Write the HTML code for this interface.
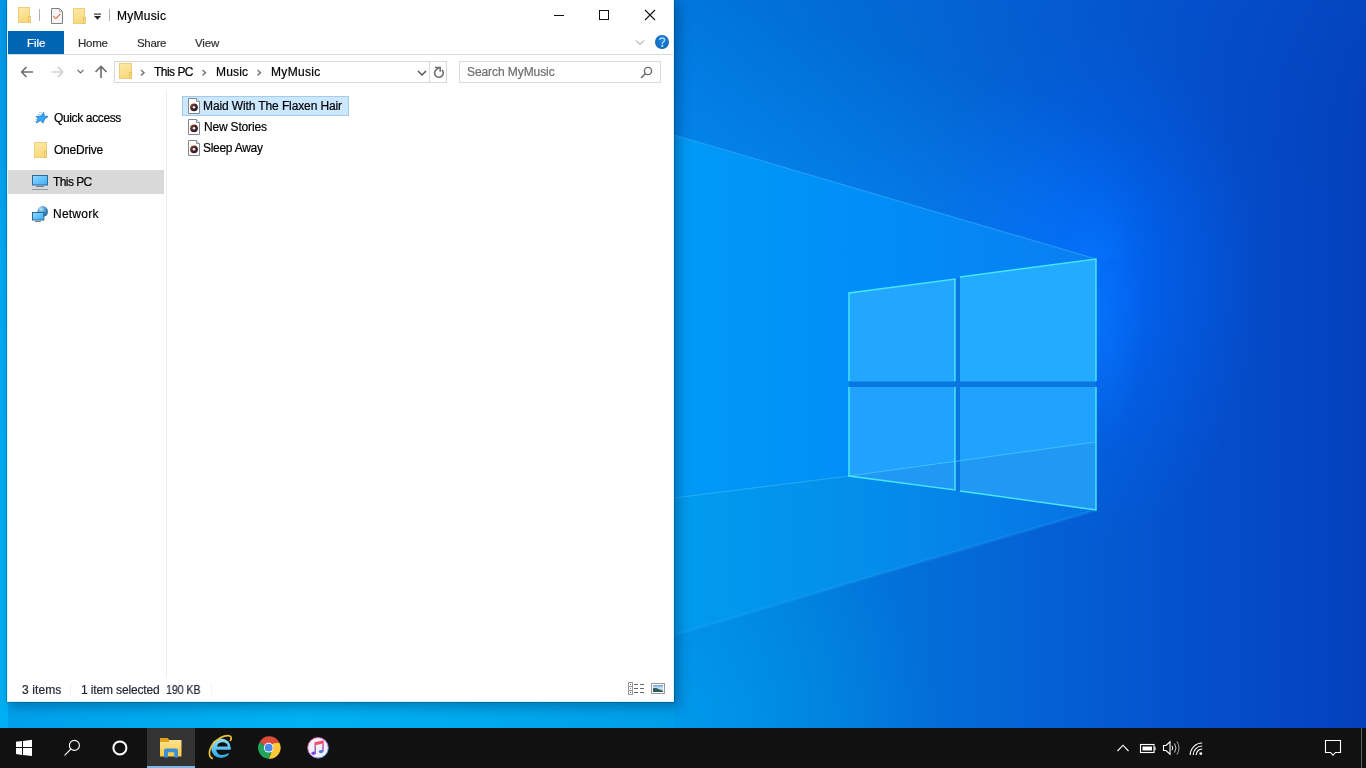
<!DOCTYPE html>
<html><head><meta charset="utf-8">
<style>
*{margin:0;padding:0;box-sizing:border-box}
html,body{width:1366px;height:768px;overflow:hidden;background:#0558cc}
body{position:relative;font-family:"Liberation Sans",sans-serif;font-size:12px;color:#000}
.a{position:absolute}
.t{position:absolute;white-space:nowrap;line-height:14px;z-index:5;will-change:transform;-webkit-text-stroke:0.2px currentColor}
#wall{position:absolute;left:0;top:0;width:1366px;height:728px}
#win{position:absolute;left:7px;top:0;width:667px;height:702px;background:#fff;border:1px solid #d8f8ff;border-top:0;box-shadow:0 0 0 1px rgba(0,50,90,.28),4px 4px 11px 1px rgba(0,40,80,.36)}
#tb{position:absolute;left:0;top:728px;width:1366px;height:40px;background:#111}
</style></head><body>
<!-- WALLPAPER -->
<svg id="wall" width="1366" height="728" viewBox="0 0 1366 728">
<defs>
<linearGradient id="gBase" gradientUnits="userSpaceOnUse" x1="674" y1="0" x2="1366" y2="0"><stop offset="0" stop-color="#0088e4"/><stop offset="0.18" stop-color="#007cdc"/><stop offset="0.47" stop-color="#0466d6"/><stop offset="0.76" stop-color="#044fcc"/><stop offset="1" stop-color="#0440bc"/></linearGradient>
<linearGradient id="gBeam" gradientUnits="userSpaceOnUse" x1="674" y1="0" x2="1096" y2="0"><stop offset="0" stop-color="#009af6"/><stop offset="0.45" stop-color="#008ef8"/><stop offset="1" stop-color="#0a7ef2"/></linearGradient>
<linearGradient id="gFloor" gradientUnits="userSpaceOnUse" x1="674" y1="0" x2="1096" y2="0"><stop offset="0" stop-color="#009cef"/><stop offset="0.5" stop-color="#048cea"/><stop offset="1" stop-color="#0672e4"/></linearGradient>
<radialGradient id="gGlow" cx="0.5" cy="0.5" r="0.5">
<stop offset="0" stop-color="#0068ff" stop-opacity="0.9"/>
<stop offset="0.55" stop-color="#0068ff" stop-opacity="0.315"/>
<stop offset="1" stop-color="#0068ff" stop-opacity="0"/>
</radialGradient>
<radialGradient id="gBL" gradientUnits="userSpaceOnUse" cx="674" cy="728" r="260">
<stop offset="0" stop-color="#00a8f0" stop-opacity="0.55"/>
<stop offset="1" stop-color="#00a8f0" stop-opacity="0"/>
</radialGradient>
<linearGradient id="gLeft" gradientUnits="userSpaceOnUse" x1="0" y1="0" x2="674" y2="0">
<stop offset="0" stop-color="#00a0ea"/><stop offset="0.45" stop-color="#00b2f2"/><stop offset="1" stop-color="#009ee8"/>
</linearGradient>
<linearGradient id="gTop" gradientUnits="userSpaceOnUse" x1="0" y1="0" x2="0" y2="200"><stop offset="0" stop-color="#0450c8" stop-opacity="0.3"/><stop offset="1" stop-color="#0340b0" stop-opacity="0"/></linearGradient>
<linearGradient id="gRayGlow" gradientUnits="userSpaceOnUse" x1="885" y1="197" x2="927" y2="53"><stop offset="0" stop-color="#0a88ff" stop-opacity="0.32"/><stop offset="1" stop-color="#0a88ff" stop-opacity="0"/></linearGradient>
<linearGradient id="gLeftV" gradientUnits="userSpaceOnUse" x1="0" y1="0" x2="0" y2="728"><stop offset="0" stop-color="#0098ea"/><stop offset="0.4" stop-color="#00abf4"/><stop offset="1" stop-color="#00b0f4"/></linearGradient>
<linearGradient id="gRayMask" gradientUnits="userSpaceOnUse" x1="674" y1="0" x2="1366" y2="0"><stop offset="0" stop-color="#fff"/><stop offset="0.53" stop-color="#fff"/><stop offset="0.70" stop-color="#000"/></linearGradient>
<mask id="mRay" maskUnits="userSpaceOnUse" x="0" y="0" width="1366" height="728"><rect x="0" y="0" width="1366" height="728" fill="url(#gRayMask)"/></mask>
<radialGradient id="gHalo" cx="0.5" cy="0.5" r="0.5"><stop offset="0" stop-color="#0a7cff" stop-opacity="0.55"/><stop offset="1" stop-color="#0a7cff" stop-opacity="0"/></radialGradient>
<filter id="fSoft" x="-5%" y="-5%" width="110%" height="110%"><feGaussianBlur stdDeviation="1.2"/></filter>
</defs>
<rect width="1366" height="728" fill="url(#gBase)"/>
<rect width="1366" height="728" fill="url(#gBL)"/>
<ellipse cx="1090" cy="280" rx="170" ry="260" fill="url(#gGlow)"/>
<rect width="1366" height="200" fill="url(#gTop)"/>
<ellipse cx="1098" cy="320" rx="45" ry="130" fill="url(#gHalo)"/>
<polygon points="674,0 1366,0 1366,259 1096,259 674,135" fill="url(#gRayGlow)" mask="url(#mRay)"/>
<rect width="674" height="728" fill="url(#gLeft)"/>
<rect width="8" height="728" fill="url(#gLeftV)"/>
<g>
<polygon points="674,135 1096,259 1096,445 849,476 674,498" fill="url(#gBeam)"/>
<polygon points="674,498 849,476 1096,445 1096,510 674,635" fill="url(#gFloor)"/>
</g>
<line x1="674" y1="135" x2="1096" y2="259" stroke="#3ab0ff" stroke-opacity="0.55" stroke-width="1.2"/>
<line x1="674" y1="635" x2="1096" y2="510" stroke="#3ab0ff" stroke-opacity="0.18" stroke-width="3"/>
<line x1="674" y1="498" x2="849" y2="476" stroke="#50c8ff" stroke-opacity="0.45" stroke-width="1.2"/>
<polygon points="849,293 1096,259 1096,510 849,476" fill="#0a76e0"/>
<polygon points="849,293 955,279 955,381.5 849,381.5" fill="#22a6fe"/>
<polygon points="960,277 1096,259 1096,381.5 960,381.5" fill="#22abff"/>
<polygon points="849,387 955,387 955,462 849,476" fill="#22a2ff"/>
<polygon points="849,476 955,462 955,490 849,476" fill="#2098f4"/>
<polygon points="960,387 1096,387 1096,442 960,461" fill="#22a2ff"/>
<polygon points="960,461 1096,442 1096,510 960,491" fill="#2298f5"/>
<g stroke="#4aeaf8" stroke-width="1.5" fill="none" stroke-opacity="0.95">
<polyline points="849,381 849,293 955,279 955,381"/>
<polyline points="849,387 849,476 955,490 955,387"/>
<polyline points="960,277 1096,259 1096,381"/>
<polyline points="1096,387 1096,510 960,491"/>
</g>
<line x1="849" y1="476" x2="1096" y2="442" stroke="#50dcff" stroke-opacity="0.6" stroke-width="1.2"/>
</svg>

<!-- WINDOW -->
<div id="win"></div>
<div id="ui" class="a" style="left:0;top:0;width:1366px;height:768px">
<!--TEXT-->
<div class="t" style="left:116.90px;top:8.80px;font-size:12px;letter-spacing:0.267px;color:#000">MyMusic</div>
<div class="t" style="left:26.70px;top:35.90px;font-size:11.5px;letter-spacing:-0.033px;color:#fff">File</div>
<div class="t" style="left:77.90px;top:35.90px;font-size:11.5px;letter-spacing:-0.233px;color:#333">Home</div>
<div class="t" style="left:136.70px;top:36.00px;font-size:11.5px;letter-spacing:-0.300px;color:#333">Share</div>
<div class="t" style="left:195.40px;top:36.00px;font-size:11.5px;letter-spacing:-0.167px;color:#333">View</div>
<div class="t" style="left:153.95px;top:64.80px;font-size:12px;letter-spacing:-0.525px;color:#000">This PC</div>
<div class="t" style="left:215.90px;top:64.90px;font-size:12px;letter-spacing:0.175px;color:#000">Music</div>
<div class="t" style="left:270.50px;top:64.90px;font-size:12px;letter-spacing:0.317px;color:#000">MyMusic</div>
<div class="t" style="left:467.40px;top:64.90px;font-size:12px;letter-spacing:-0.077px;color:#6d6d6d">Search MyMusic</div>
<div class="t" style="left:53.70px;top:110.90px;font-size:12px;letter-spacing:-0.364px;color:#000">Quick access</div>
<div class="t" style="left:53.70px;top:142.70px;font-size:12px;letter-spacing:-0.229px;color:#000">OneDrive</div>
<div class="t" style="left:53.40px;top:174.90px;font-size:12px;letter-spacing:-0.567px;color:#000">This PC</div>
<div class="t" style="left:52.70px;top:207.00px;font-size:12px;letter-spacing:0.233px;color:#000">Network</div>
<div class="t" style="left:203.40px;top:99.05px;font-size:12px;letter-spacing:-0.113px;color:#000">Maid With The Flaxen Hair</div>
<div class="t" style="left:203.70px;top:120.05px;font-size:12px;letter-spacing:-0.180px;color:#000">New Stories</div>
<div class="t" style="left:203.40px;top:140.85px;font-size:12px;letter-spacing:-0.289px;color:#000">Sleep Away</div>
<div class="t" style="left:21.50px;top:682.80px;font-size:12px;letter-spacing:0.100px;color:#1e2533">3 items</div>
<div class="t" style="left:81.05px;top:682.80px;font-size:12px;letter-spacing:-0.139px;color:#1e2533">1 item selected</div>
<div class="t" style="left:165.92px;top:682.80px;font-size:12px;color:#1e2533;transform:scaleX(0.879);transform-origin:0 0">190 KB</div>
<!--/TEXT-->
<!-- title bar icons -->
<svg class="a" style="left:0;top:0" width="674" height="90" viewBox="0 0 674 90">
 <defs><linearGradient id="gFy" x1="0" y1="0" x2="0.3" y2="1"><stop offset="0" stop-color="#fdeaa8"/><stop offset="1" stop-color="#f9d97c"/></linearGradient></defs>
 <!-- folder 1 -->
 <g>
  <rect x="18.5" y="7.5" width="11" height="15" fill="url(#gFy)" stroke="#ebcf7c"/>
  <rect x="28.5" y="16.5" width="2" height="6" fill="#f9dc88" stroke="#e3c060" stroke-width="0.8"/>
 </g>
 <rect x="39" y="9" width="1" height="12" fill="#b0b0b0"/>
 <!-- checklist doc -->
 <g>
  <path d="M51.5 8.5 H59.5 L62.5 11.5 V23.5 H51.5 Z" fill="#f6f6f8" stroke="#808080"/>
  <path d="M59.5 8.5 V11.5 H62.5" fill="none" stroke="#9a9a9a" stroke-width="0.8"/>
  <path d="M53.3 16.3 L55.8 18.6 L60.3 14" fill="none" stroke="#e27a52" stroke-width="1.25"/>
 </g>
 <!-- folder 2 -->
 <g>
  <rect x="73.5" y="8.5" width="11" height="15" fill="url(#gFy)" stroke="#ebcf7c"/>
  <rect x="83.5" y="17.5" width="2" height="6" fill="#f9dc88" stroke="#e3c060" stroke-width="0.8"/>
 </g>
 <!-- dropdown -->
 <rect x="94" y="13.6" width="7" height="1" fill="#111"/>
 <path d="M94 16 H101 L97.5 19.8 Z" fill="#222"/>
 <rect x="109" y="9" width="1" height="12" fill="#b0b0b0"/>
 <!-- window controls -->
 <rect x="554" y="15" width="10" height="1" fill="#111"/>
 <rect x="599.5" y="10.5" width="9" height="9" fill="none" stroke="#111"/>
 <path d="M645 10 L655 20 M655 10 L645 20" stroke="#111" stroke-width="1.1"/>
 <!-- ribbon -->
 <rect x="8" y="31" width="56" height="23" fill="#0066b4"/>
 <rect x="8" y="54" width="665" height="1" fill="#dadbdc"/>
 <path d="M636 40.5 L640 44.5 L644 40.5" fill="none" stroke="#8a8a8a" stroke-width="1"/>
 <defs><radialGradient id="gHelp" cx="0.5" cy="0.45" r="0.55"><stop offset="0" stop-color="#1e7fd8"/><stop offset="0.8" stop-color="#166fc6"/><stop offset="1" stop-color="#0d5aa6"/></radialGradient></defs>
 <circle cx="662" cy="42" r="7" fill="url(#gHelp)"/>
 <path d="M659.6 39.8 Q659.9 38 662.2 38 Q664.6 38 664.6 40.1 Q664.6 41.4 663.1 42.2 Q662.3 42.7 662.3 44.2" fill="none" stroke="#a8e4ff" stroke-width="1.35"/>
 <rect x="661.3" y="45.1" width="1.9" height="1.8" fill="#a8ecff"/>
 <!-- nav arrows -->
 <path d="M21.5 72 H33 M21.5 72 L26.5 67 M21.5 72 L26.5 77" fill="none" stroke="#6b6b6b" stroke-width="1.6"/>
 <path d="M63 72 H51.5 M63 72 L58 67 M63 72 L58 77" fill="none" stroke="#d0d0d0" stroke-width="1.6"/>
 <path d="M77.5 69.8 L80.5 72.8 L83.5 69.8" fill="none" stroke="#6b6b6b" stroke-width="1.2"/>
 <path d="M101 78 V66.5 M95.5 72 L101 66.5 L106.5 72" fill="none" stroke="#6b6b6b" stroke-width="1.6"/>
 <!-- address box -->
 <rect x="114.5" y="61.5" width="332" height="21" fill="#fff" stroke="#d9d9d9"/>
 <rect x="429" y="62" width="1" height="20" fill="#d9d9d9"/>
 <g>
  <rect x="119.5" y="63.5" width="12" height="15" fill="url(#gFy)" stroke="#ebcf7c"/>
  <rect x="129.5" y="72.5" width="2" height="6" fill="#f9dc88" stroke="#e3c060" stroke-width="0.8"/>
 </g>
 <path d="M141 70 L144 72.7 L141 75.4" fill="none" stroke="#7a7a7a" stroke-width="1.5"/>
 <path d="M202.5 70 L205.5 72.7 L202.5 75.4" fill="none" stroke="#7a7a7a" stroke-width="1.5"/>
 <path d="M257.5 70 L260.5 72.7 L257.5 75.4" fill="none" stroke="#7a7a7a" stroke-width="1.5"/>
 <path d="M418 71 L422 75 L426 71" fill="none" stroke="#555" stroke-width="1.5"/>
 <path d="M441.9 69.9 A4.3 4.3 0 1 1 436.3 69.6 L439.2 67.6" fill="none" stroke="#6d6d6d" stroke-width="1.6"/>
 <path d="M435 67.4 H440.2 V71.8" fill="none" stroke="#6d6d6d" stroke-width="1.5"/>
 <!-- search box -->
 <rect x="459.5" y="61.5" width="201" height="21" fill="#fff" stroke="#d9d9d9"/>
 <circle cx="648" cy="71" r="3.6" fill="none" stroke="#6b6b6b" stroke-width="1.4"/>
 <path d="M645.5 73.5 L641 78" stroke="#6b6b6b" stroke-width="1.6"/>
</svg>

<!-- nav pane -->
<div class="a" style="left:8px;top:170px;width:156px;height:24px;background:#d9d9d9"></div>
<div class="a" style="left:166px;top:90px;width:1px;height:588px;background:#f0f0f0"></div>
<svg class="a" style="left:0;top:90px" width="180" height="140" viewBox="0 90 180 140">
 <!-- star -->
 <path d="M43.6 112.3 L44.3 116 L48 116.5 L44.7 119.1 L43.1 123.1 L40.4 120.6 L36.3 123.1 L37.8 118.5 L36 116.5 L41 116 Z" fill="#36a6f0" stroke="#1a6fc0" stroke-width="0.7" stroke-linejoin="round"/>
 <path d="M38.9 112.6 H42 M37.3 114.5 H40.4 M35.2 119.6 H37 M33.9 121.5 H36.5" stroke="#8ec4ec" stroke-width="0.7"/>
 <!-- onedrive folder -->
 <rect x="34.5" y="142.5" width="12" height="15" fill="url(#gFy)" stroke="#ebcf7c"/>
 <rect x="44.5" y="151.5" width="2" height="6" fill="#f9dc88" stroke="#e3c060" stroke-width="0.8"/>
 <!-- this pc monitor -->
 <defs>
  <linearGradient id="gScr" x1="0" y1="0" x2="1" y2="1"><stop offset="0" stop-color="#9ad8ff"/><stop offset="1" stop-color="#34aef8"/></linearGradient>
  <radialGradient id="gGlobe" cx="0.35" cy="0.3" r="0.8"><stop offset="0" stop-color="#b8e4f8"/><stop offset="0.5" stop-color="#4a96cc"/><stop offset="1" stop-color="#1e5a8a"/></radialGradient>
 </defs>
 <rect x="32.5" y="175.5" width="15" height="9.5" fill="url(#gScr)" stroke="#2c6a98"/>
 <rect x="36" y="186" width="8" height="1" fill="#6f7f8c"/>
 <rect x="32" y="189" width="16" height="1" fill="#8d99a3"/>
 <!-- network -->
 <circle cx="42.7" cy="211.4" r="5.3" fill="url(#gGlobe)"/>
 <rect x="32.5" y="212.5" width="11.3" height="7.5" fill="url(#gScr)" stroke="#2c6a98"/>
 <rect x="35" y="221" width="5.8" height="1" fill="#6f7f8c"/>
</svg>

<!-- file list -->
<div class="a" style="left:182px;top:96px;width:167px;height:20px;background:#cce8ff;border:1px solid #a4cbe9"></div>
<svg class="a" style="left:180px;top:95px" width="30" height="65" viewBox="180 95 30 65">
 <defs><linearGradient id="gDisc" x1="0" y1="0" x2="1" y2="1"><stop offset="0" stop-color="#a0602a"/><stop offset="0.45" stop-color="#4a2428"/><stop offset="1" stop-color="#2a1838"/></linearGradient></defs>
 <g id="fi">
  <path d="M188.5 98.5 H196.5 L199.5 101.5 V113.5 H188.5 Z" fill="#fff" stroke="#7f8890"/>
  <path d="M196.5 98.5 V101.5 H199.5" fill="#f4f4f4" stroke="#7f8890" stroke-width="0.9"/>
  <circle cx="194" cy="107.3" r="3.9" fill="url(#gDisc)"/>
  <circle cx="194" cy="107.3" r="1.3" fill="#f0f0f0"/>
 </g>
 <use href="#fi" y="21"/>
 <use href="#fi" y="42"/>
</svg>

<!-- status bar -->
<div class="a" style="left:70px;top:683px;width:1px;height:14px;background:#f3f3f3"></div>
<div class="a" style="left:211px;top:683px;width:1px;height:14px;background:#f3f3f3"></div>
<svg class="a" style="left:620px;top:675px" width="54" height="26" viewBox="620 675 54 26">
 <rect x="628.5" y="682.5" width="4" height="12" fill="#fff" stroke="#999"/>
 <path d="M628.5 686.5 h4 M628.5 690.5 h4" stroke="#999"/>
 <rect x="630" y="684" width="1" height="1" fill="#555"/>
 <rect x="630" y="688" width="1" height="1" fill="#6a8ab0"/>
 <rect x="630" y="692" width="1" height="1" fill="#a03030"/>
 <path d="M634 684.5 h4 M640 684.5 h4 M634 688.5 h4 M640 688.5 h4 M634 692.5 h4 M640 692.5 h4" stroke="#666" stroke-width="1"/>
 <rect x="651.5" y="683.5" width="13" height="10" fill="#fff" stroke="#9a9a9a"/>
 <defs><linearGradient id="gPic" x1="0" y1="0" x2="0" y2="1"><stop offset="0" stop-color="#6c9ad6"/><stop offset="0.45" stop-color="#c8eef8"/><stop offset="1" stop-color="#7aa0c0"/></linearGradient></defs>
 <rect x="653" y="685" width="10" height="7" fill="url(#gPic)"/>
 <path d="M653 692 V688.3 Q656 687.2 659 689.2 Q661 690.5 663 691 V692 Z" fill="#2e5c58"/>
</svg>
</div>

<!-- TASKBAR -->
<div id="tb">
<svg class="a" style="left:0;top:0" width="1366" height="40" viewBox="0 728 1366 40">
 <defs>
  <linearGradient id="gFold" x1="0" y1="0" x2="0" y2="1">
   <stop offset="0" stop-color="#fde59a"/><stop offset="1" stop-color="#f9c940"/>
  </linearGradient>
  <linearGradient id="gIE" x1="0" y1="0" x2="0" y2="1">
   <stop offset="0" stop-color="#8ee0fb"/><stop offset="1" stop-color="#2aa8e8"/>
  </linearGradient>
  <linearGradient id="gRing" x1="0" y1="0" x2="1" y2="1">
   <stop offset="0" stop-color="#ff5a7a"/><stop offset="0.5" stop-color="#b060f0"/><stop offset="1" stop-color="#40c8f0"/>
  </linearGradient>
  <linearGradient id="gNote" x1="0" y1="0" x2="0" y2="1">
   <stop offset="0" stop-color="#f05070"/><stop offset="1" stop-color="#6a50e0"/>
  </linearGradient>
 </defs>
 <!-- start -->
 <path d="M16 741.8 L22 740.9 V747 H16 Z M23 741.1 L32 739.8 V747 H23 Z M16 748 H22 V755 L16 754 Z M23 748 H32 V756 L23 755.1 Z" fill="#fff"/>
 <!-- search -->
 <circle cx="74.4" cy="745.4" r="5" fill="none" stroke="#fff" stroke-width="1.1"/>
 <path d="M70.8 749.2 L64.6 755.4" stroke="#fff" stroke-width="1.2"/>
 <!-- cortana -->
 <circle cx="119.9" cy="747.9" r="6.5" fill="none" stroke="#fff" stroke-width="2"/>
 <!-- explorer active -->
 <rect x="147" y="728" width="48" height="40" fill="#333"/>
 <rect x="147" y="766" width="48" height="2" fill="#76b9ed"/>
 <path d="M160 738 H167.5 L169 740 H181.5 V756.5 H160 Z" fill="url(#gFold)"/>
 <path d="M160 738 H167.5 L169 740 V742 H160 Z" fill="#dda31a"/>
 <path d="M164 757.5 V750.5 Q164 748.6 166 748.6 H176 Q178 748.6 178 750.5 V757.5 H174.2 V752.2 H168 V757.5 Z" fill="#3a8fd6"/>
 <!-- IE -->
 <circle cx="221" cy="748.2" r="9.8" fill="url(#gIE)"/>
 <path d="M217 746.4 Q218 742.2 222.5 742.2 Q227 742.2 228 746.4 Z" fill="#111"/>
 <path d="M216 749.8 H231 V753.6 H227.5 Q226 755 222 755 Q217.5 755 216 749.8 Z" fill="#111"/>
 <path d="M212.8 758.6 C207.5 756.5, 208.5 748.5, 215 741.5 C220.5 736, 229 734.2, 230.8 736.8 C231.5 738, 231.2 739.6, 230.2 741" fill="none" stroke="#f2c230" stroke-width="1.7"/>
 <!-- chrome -->
 <g transform="translate(268.7 747.7)">
  <path d="M-9 -5.8 A11 11 0 0 1 10.6 -5.2 L4.5 -4.5 L0 0 L-4.2 -1.9 Z" fill="#dd4b3d"/>
  <path d="M10.6 -5.2 A11 11 0 0 1 0 11 L2.6 4.5 L0 0 L4.5 -4.5 Z" fill="#fcc83a"/>
  <path d="M0 11 A11 11 0 0 1 -9 -5.8 L-4.2 -1.9 L0 0 L2.6 4.5 Z" fill="#22a35a"/>
  <circle r="4.85" fill="#f4f4f4"/>
  <circle r="3.85" fill="#4a88ee"/>
 </g>
 <!-- itunes -->
 <circle cx="318" cy="747.8" r="10.3" fill="#f3f0f6" stroke="url(#gRing)" stroke-width="0.9"/>
 <path d="M315.2 753 V742.8 L323 741.2 V751.4" fill="none" stroke="url(#gNote)" stroke-width="1.4"/>
 <path d="M315.2 742.8 L323 741.2 V743.6 L315.2 745.2 Z" fill="#f05070"/>
 <ellipse cx="313.6" cy="753.2" rx="2.2" ry="1.7" fill="#7a4ae0"/>
 <ellipse cx="321" cy="751.6" rx="2.2" ry="1.7" fill="#4a7ae0"/>
 <!-- tray -->
 <path d="M1117.5 751 L1123 745.2 L1128.5 751" fill="none" stroke="#fff" stroke-width="1.1"/>
 <rect x="1140.5" y="744.5" width="13.5" height="8" fill="none" stroke="#fff" stroke-width="1.1"/>
 <rect x="1142.5" y="746.5" width="9.5" height="4" fill="#fff"/>
 <rect x="1154.3" y="746.8" width="1.2" height="3.5" fill="#fff"/>
 <path d="M1163.5 745.5 H1166 L1170 741.8 V754.2 L1166 750.5 H1163.5 Z" fill="none" stroke="#fff" stroke-width="1.1"/>
 <path d="M1172 745.8 Q1173.5 748 1172 750.2" fill="none" stroke="#fff" stroke-width="1"/>
 <path d="M1174.5 743.5 Q1177.5 748 1174.5 752.5" fill="none" stroke="#ccc" stroke-width="1"/>
 <path d="M1177 741.5 Q1181 748 1177 754.5" fill="none" stroke="#aaa" stroke-width="1"/>
 <path d="M1190.2 755 A12 12 0 0 1 1202.2 743" fill="none" stroke="#fff" stroke-width="1.1"/>
 <path d="M1193.2 755 A9 9 0 0 1 1202.2 746" fill="none" stroke="#fff" stroke-width="1.1"/>
 <path d="M1196.2 755 A6 6 0 0 1 1202.2 749" fill="none" stroke="#fff" stroke-width="1.1"/>
 <circle cx="1200.8" cy="753.6" r="1.4" fill="#fff"/>
 <!-- action center -->
 <path d="M1325.5 740.5 H1340.5 V752.5 H1335.5 L1333 755.2 L1330.5 752.5 H1325.5 Z" fill="none" stroke="#fff" stroke-width="1.1"/>
 <rect x="1361" y="728" width="1" height="40" fill="#5e5e5e"/>
</svg>
</div>
</body></html>
